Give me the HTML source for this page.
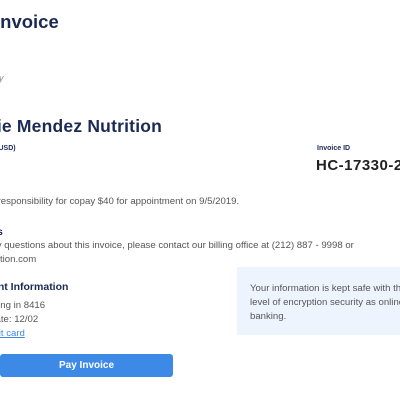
<!DOCTYPE html>
<html><head><style>
html,body{margin:0;padding:0;width:400px;height:400px;overflow:hidden;background:#fff;font-family:"Liberation Sans",sans-serif;}
.a{position:absolute;white-space:nowrap;}
.n{color:#1b2a55;font-weight:bold;}
.g{color:#555;font-size:9.6px;}
</style></head><body>
<div class="a n" style="left:-5px;top:11px;font-size:18.5px;">Invoice</div>
<div class="a" style="left:-4px;top:73px;font-size:9px;color:#888;font-style:italic;">ry</div>
<div class="a n" style="left:-37px;top:116px;font-size:17.5px;letter-spacing:0.2px;">Hollie Mendez Nutrition</div>
<div class="a n" style="left:-22px;top:145px;font-size:7px;">Total (USD)</div>
<div class="a n" style="left:317px;top:145px;font-size:7px;">Invoice ID</div>
<div class="a n" style="left:316px;top:157px;font-size:15px;letter-spacing:0.5px;color:#222;">HC-17330-2</div>
<div class="a g" style="left:-35px;top:196px;">Patient responsibility for copay $40 for appointment on 9/5/2019.</div>
<div class="a n" style="left:-25px;top:227px;font-size:10px;">Notes</div>
<div class="a g" style="left:-31px;top:240px;">For any questions about this invoice, please contact our billing office at (212) 887 - 9998 or</div>
<div class="a g" style="left:-32px;top:254px;">hmnutrition.com</div>
<div class="a n" style="left:-36px;top:281px;font-size:10.5px;">Payment Information</div>
<div class="a g" style="left:-39px;top:300px;">Visa ending in 8416</div>
<div class="a g" style="left:-29px;top:314px;">Exp date: 12/02</div>
<div class="a" style="left:-13px;top:328px;font-size:9.6px;color:#3d8ae6;text-decoration:underline;">Edit card</div>
<div class="a" style="left:0;top:354px;width:173px;height:23px;background:#3d8ae6;border-radius:3px;color:#fff;font-size:10px;font-weight:bold;text-align:center;line-height:23px;">Pay Invoice</div>
<div class="a" style="left:237px;top:267px;width:163px;height:68px;background:#eef4fd;"></div>
<div class="a g" style="left:250px;top:282px;line-height:14px;width:150px;overflow:hidden;">Your information is kept safe with the same<br>level of encryption security as online<br>banking.</div>
</body></html>
